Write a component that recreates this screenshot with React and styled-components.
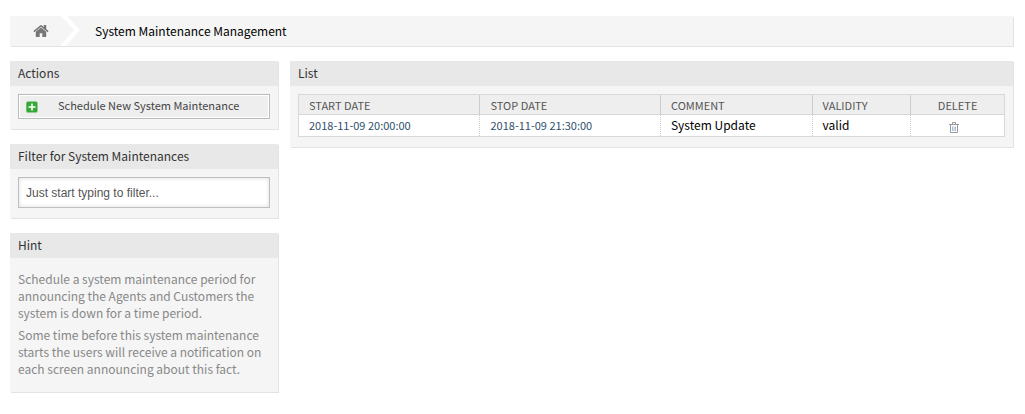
import React, { useState } from "react";
import styled, { createGlobalStyle } from "styled-components";

const GlobalStyle = createGlobalStyle`
  *, *::before, *::after { box-sizing: border-box; }
  body {
    margin: 0;
    background: #fff;
    color: #000;
    font: 12px/17px "Noto Sans CJK SC", "Noto Sans", sans-serif;
  }
`;

const Page = styled.div`
  padding: 16px 12px 16px 10px;
`;

const Breadcrumb = styled.nav`
  margin-bottom: 15px;
  background: #f5f5f5;
  box-shadow: 1px 1px 0 #e3e3e3;
`;

const Crumbs = styled.ol`
  display: flex;
  height: 30px;
  margin: 0;
  padding: 0;
  list-style: none;
`;

const Crumb = styled.li`
  display: flex;
  align-items: center;
`;

const HomeLink = styled.a`
  display: flex;
  padding: 0 11px 0 23px;
  color: #777;
`;

const CrumbLink = styled.a`
  padding: 0 0 2px 15px;
  color: #000;
  text-decoration: none;
`;

const Columns = styled.div`
  display: grid;
  grid-template-columns: minmax(200px, 268fr) minmax(0, 723fr);
  gap: 12px;
  align-items: start;
`;

const Sidebar = styled.aside`
  display: grid;
  gap: 15px;
`;

const Panel = styled.section`
  background: #f5f5f5;
  box-shadow: 1px 1px 0 #e3e3e3;
`;

const PanelTitle = styled.h2`
  margin: 0;
  padding: 3px 8px 5px;
  background: #e8e8e8;
  color: #333;
  font-size: 12px;
  font-weight: 400;
`;

const PanelBody = styled.div`
  padding: 8px 8px 10px;
`;

const ActionButton = styled.button`
  display: flex;
  align-items: center;
  gap: 20px;
  width: 100%;
  height: 25px;
  padding: 0 7px;
  border: 1px solid #bbb;
  background: #eee;
  box-shadow: inset 0 0 0 1px #fff;
  color: #444;
  font: inherit;
  font-size: 11px;
  line-height: 17px;
`;

const ButtonLabel = styled.span`
  padding-bottom: 2px;
`;

const FilterInput = styled.input`
  display: block;
  width: 100%;
  height: 31px;
  padding: 0 7px;
  border: 1px solid #bfbfbf;
  border-radius: 0;
  background: #fff;
  box-shadow: inset 0 0 4px #ddd;
  color: #333;
  font: 12px "Liberation Sans", Arial, sans-serif;

  &::placeholder {
    color: #555;
    opacity: 1;
  }
`;

const HintText = styled.div`
  padding-top: 4px;
  color: #888;

  p {
    margin: 0 0 5px;
  }
`;

const Table = styled.table`
  width: 100%;
  table-layout: fixed;
  border: 1px solid #d8d8d8;
  border-collapse: separate;
  border-spacing: 0;
  background: #fff;
`;

const Column = styled.col`
  width: ${(p) => p.$share}%;
`;

const HeadCell = styled.th`
  height: 20px;
  padding: 2px 10px 0;
  border-bottom: 1px solid #d8d8d8;
  background: #eee;
  color: #555;
  font-size: 11px;
  font-weight: 400;
  line-height: 17px;
  text-align: ${(p) => (p.$center ? "center" : "left")};
  text-transform: uppercase;

  & + & {
    border-left: 1px solid #ccc;
  }
`;

const Cell = styled.td`
  height: 20px;
  padding: 1px 10px 2px;
  vertical-align: top;

  & + & {
    border-left: 1px dotted #ccc;
  }
`;

const DeleteCell = styled(Cell)`
  padding: 0 18px 0 10px;
  text-align: center;
`;

const DateLink = styled.a`
  color: #2f4f6b;
  font-size: 11px;
  text-decoration: none;
`;

const DeleteLink = styled.a`
  display: flex;
  justify-content: center;
  padding-top: 7px;
  color: #999;
`;

const HomeIcon = () => (
  <svg width="16" height="14" viewBox="0 0 16 14" fill="currentColor" aria-hidden="true">
    <path d="M8 3.4 2.8 7.8v4.6c0 .4.2.6.6.6h3.3V9.3h2.6V13h3.3c.4 0 .6-.2.6-.6V7.8z" />
    <path d="M15.3 6.8 13.2 5V1.5c0-.3-.1-.4-.4-.4h-1.6c-.3 0-.4.1-.4.4V3L8.9 1.4a1.4 1.4 0 0 0-1.8 0L.7 6.8c-.2.1-.2.3-.1.5l.5.6c.2.2.4.2.6 0L8 2.7l6.3 5.2c.2.2.4.2.6 0l.5-.6c.1-.2.1-.4-.1-.5z" />
  </svg>
);

const Chevron = () => (
  <svg width="20" height="30" viewBox="0 0 20 30" fill="#fff" aria-hidden="true">
    <path d="M1 0h6l13 14L6 30H0l14-16z" />
  </svg>
);

const PlusIcon = () => (
  <svg width="12" height="12" viewBox="0 0 12 12" aria-hidden="true">
    <rect x="0.3" y="0.5" width="11.2" height="11" rx="1.6" fill="#35a835" />
    <path d="M6 2.5v7M2.5 6h7" stroke="#fff" strokeWidth="1.6" />
  </svg>
);

const TrashIcon = () => (
  <svg width="10" height="11" viewBox="0 0 10 11" fill="none" stroke="currentColor" aria-hidden="true">
    <path d="M0 2.5h10M3.5 2V.5h3V2M1.5 3v7.5h7V3" />
    <path d="M3.5 4.5V9M5 4.5V9M6.5 4.5V9" stroke="#8fabcf" strokeWidth="0.8" />
  </svg>
);

const rows = [
  {
    start: "2018-11-09 20:00:00",
    stop: "2018-11-09 21:30:00",
    comment: "System Update",
    validity: "valid",
  },
];

export default function App() {
  const [filter, setFilter] = useState("");
  const visible = rows.filter((row) =>
    Object.values(row).join(" ").toLowerCase().includes(filter.toLowerCase())
  );

  return (
    <>
      <GlobalStyle />
      <Page>
        <Breadcrumb aria-label="Breadcrumb">
          <Crumbs>
            <Crumb>
              <HomeLink href="#" aria-label="Home">
                <HomeIcon />
              </HomeLink>
              <Chevron />
            </Crumb>
            <Crumb>
              <CrumbLink href="#">System Maintenance Management</CrumbLink>
            </Crumb>
          </Crumbs>
        </Breadcrumb>
        <Columns>
          <Sidebar>
            <Panel>
              <PanelTitle>Actions</PanelTitle>
              <PanelBody>
                <ActionButton type="button">
                  <PlusIcon />
                  <ButtonLabel>Schedule New System Maintenance</ButtonLabel>
                </ActionButton>
              </PanelBody>
            </Panel>
            <Panel>
              <PanelTitle id="filter-title">Filter for System Maintenances</PanelTitle>
              <PanelBody>
                <FilterInput
                  type="text"
                  aria-labelledby="filter-title"
                  placeholder="Just start typing to filter..."
                  value={filter}
                  onChange={(e) => setFilter(e.target.value)}
                />
              </PanelBody>
            </Panel>
            <Panel>
              <PanelTitle>Hint</PanelTitle>
              <PanelBody>
                <HintText>
                  <p>
                    Schedule a system maintenance period for announcing the Agents and Customers
                    the system is down for a time period.
                  </p>
                  <p>
                    Some time before this system maintenance starts the users will receive a
                    notification on each screen announcing about this fact.
                  </p>
                </HintText>
              </PanelBody>
            </Panel>
          </Sidebar>
          <Panel as="main">
            <PanelTitle>List</PanelTitle>
            <PanelBody>
              <Table>
                <colgroup>
                  <Column $share={25.6} />
                  <Column $share={25.6} />
                  <Column $share={21.5} />
                  <Column $share={14} />
                  <Column $share={13.3} />
                </colgroup>
                <thead>
                  <tr>
                    <HeadCell>Start date</HeadCell>
                    <HeadCell>Stop date</HeadCell>
                    <HeadCell>Comment</HeadCell>
                    <HeadCell>Validity</HeadCell>
                    <HeadCell $center>Delete</HeadCell>
                  </tr>
                </thead>
                <tbody>
                  {visible.map((row) => (
                    <tr key={row.start}>
                      <Cell>
                        <DateLink href="#">{row.start}</DateLink>
                      </Cell>
                      <Cell>
                        <DateLink href="#">{row.stop}</DateLink>
                      </Cell>
                      <Cell>{row.comment}</Cell>
                      <Cell>{row.validity}</Cell>
                      <DeleteCell>
                        <DeleteLink href="#" aria-label="Delete">
                          <TrashIcon />
                        </DeleteLink>
                      </DeleteCell>
                    </tr>
                  ))}
                </tbody>
              </Table>
            </PanelBody>
          </Panel>
        </Columns>
      </Page>
    </>
  );
}
